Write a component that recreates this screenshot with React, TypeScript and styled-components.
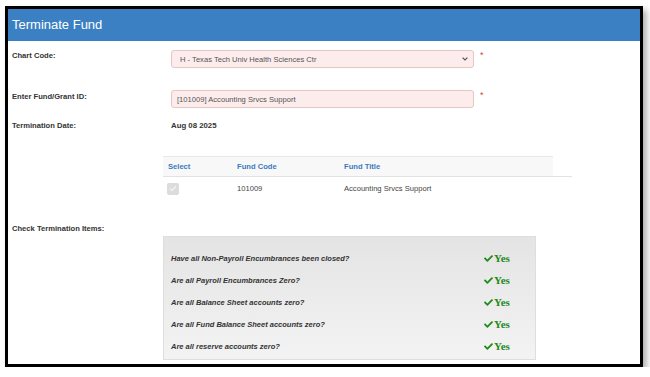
import React from 'react';
import styled, { createGlobalStyle } from 'styled-components';
import { FaCheck } from 'react-icons/fa';

const GlobalStyle = createGlobalStyle`
  html, body {
    margin: 0;
    padding: 0;
    background: #fff;
    font-family: "Liberation Sans", Arial, sans-serif;
    color: #333;
  }
`;

const Page = styled.div`
  padding: 6px 0 0 5px;
`;

const Frame = styled.div`
  width: 638px;
  height: 361px;
  box-sizing: border-box;
  border: 3px solid #000;
  box-shadow: 4px 4px 6px rgba(0, 0, 0, 0.3);
  background: #fff;
  overflow: hidden;
`;

const Header = styled.div`
  height: 32px;
  background: #3b80c3;
  color: #fff;
  font-size: 13px;
  display: flex;
  align-items: center;
  padding-left: 4px;
  padding-bottom: 2px;
  box-sizing: border-box;
`;

const Form = styled.div`
  padding-top: 9px;
`;

const Row = styled.div<{ $mt?: number }>`
  display: grid;
  grid-template-columns: 163px 1fr;
  margin-top: ${({ $mt }) => $mt ?? 0}px;
`;

const Label = styled.div`
  padding-left: 4px;
  font-size: 7.6px;
  font-weight: bold;
  line-height: 12px;
  color: #333;
`;

const FieldWrap = styled.div`
  display: flex;
  align-items: flex-start;
`;

const Field = styled.div`
  width: 303px;
  height: 18px;
  box-sizing: border-box;
  background: #fcecec;
  border: 1px solid #e6c5c5;
  border-radius: 3px;
  font-size: 7.6px;
  color: #555;
  display: flex;
  align-items: center;
  justify-content: space-between;
  padding: 0 5px 0 5px;
`;

const Required = styled.span`
  color: #d9403a;
  font-size: 9px;
  line-height: 10px;
  margin-left: 6px;
`;

const Value = styled.div`
  font-size: 7.8px;
  font-weight: bold;
  line-height: 12px;
  color: #333;
`;

const Table = styled.div`
  margin: 24px 0 0 155px;
  width: 409px;
`;

const THead = styled.div`
  width: 390px;
  height: 20px;
  display: flex;
  align-items: center;
  background: #f8f8f8;
  border-top: 1px solid #e8e8e8;
  box-sizing: border-box;
`;

const TRow = styled.div`
  height: 24px;
  display: flex;
  align-items: center;
  border-top: 1px solid #e2e2e2;
  box-sizing: border-box;
`;

const Cell = styled.div<{ $w: number; $head?: boolean }>`
  width: ${({ $w }) => $w}px;
  padding-left: 5px;
  box-sizing: border-box;
  font-size: 7.6px;
  font-weight: ${({ $head }) => ($head ? 'bold' : 'normal')};
  color: ${({ $head }) => ($head ? '#3a7bbd' : '#444')};
`;

const CheckBox = styled.span`
  display: flex;
  align-items: center;
  justify-content: center;
  width: 12px;
  height: 12px;
  background: #dcdcdc;
  border-radius: 2px;
  margin-left: -1px;
`;

const Panel = styled.div`
  margin-top: 1px;
  width: 373px;
  height: 124px;
  box-sizing: border-box;
  margin-left: -8px;
  background: linear-gradient(to bottom, #e4e4e4, #f3f3f3);
  border: 1px solid #dedede;
  padding: 10px 0 0 7px;
`;

const Item = styled.div`
  height: 22px;
  display: grid;
  grid-template-columns: 313px auto;
  align-items: center;
`;

const Question = styled.span`
  font-size: 7.5px;
  font-weight: bold;
  font-style: italic;
  color: #333;
`;

const Yes = styled.span`
  display: flex;
  align-items: center;
  color: #1d8a1d;
  font-family: "Liberation Serif", "Times New Roman", serif;
  font-weight: bold;
  font-size: 11px;
  svg {
    margin-right: 1px;
  }
`;

const questions = [
  'Have all Non-Payroll Encumbrances been closed?',
  'Are all Payroll Encumbrances Zero?',
  'Are all Balance Sheet accounts zero?',
  'Are all Fund Balance Sheet accounts zero?',
  'Are all reserve accounts zero?',
];

const Chevron = () => (
  <svg width="6" height="4" viewBox="0 0 6 4">
    <path d="M0.6 0.6 L3 3 L5.4 0.6" fill="none" stroke="#555" strokeWidth="1.2" />
  </svg>
);

const App: React.FC = () => {
  return (
    <>
      <GlobalStyle />
      <Page>
        <Frame>
          <Header>Terminate Fund</Header>
          <Form>
            <Row>
              <Label>Chart Code:</Label>
              <FieldWrap>
                <Field>
                  <span style={{ paddingLeft: 3 }}>H - Texas Tech Univ Health Sciences Ctr</span>
                  <Chevron />
                </Field>
                <Required>*</Required>
              </FieldWrap>
            </Row>
            <Row $mt={22}>
              <Label style={{ paddingTop: 1 }}>Enter Fund/Grant ID:</Label>
              <FieldWrap>
                <Field>[101009] Accounting Srvcs Support</Field>
                <Required>*</Required>
              </FieldWrap>
            </Row>
            <Row $mt={12}>
              <Label>Termination Date:</Label>
              <Value>Aug 08 2025</Value>
            </Row>
            <Table>
              <THead>
                <Cell $w={69} $head>Select</Cell>
                <Cell $w={107} $head>Fund Code</Cell>
                <Cell $w={150} $head>Fund Title</Cell>
              </THead>
              <TRow>
                <Cell $w={69}>
                  <CheckBox>
                    <svg width="8" height="7" viewBox="0 0 8 7">
                      <path d="M1 3.6 L3 5.5 L7 1.2" fill="none" stroke="#f2f2f2" strokeWidth="1.4" />
                    </svg>
                  </CheckBox>
                </Cell>
                <Cell $w={107}>101009</Cell>
                <Cell $w={200}>Accounting Srvcs Support</Cell>
              </TRow>
            </Table>
            <Row $mt={23}>
              <Label>Check Termination Items:</Label>
              <div />
            </Row>
            <Row>
              <div />
              <Panel>
                {questions.map((q) => (
                  <Item key={q}>
                    <Question>{q}</Question>
                    <Yes>
                      <FaCheck size={9} />
                      Yes
                    </Yes>
                  </Item>
                ))}
              </Panel>
            </Row>
          </Form>
        </Frame>
      </Page>
    </>
  );
};

export default App;
